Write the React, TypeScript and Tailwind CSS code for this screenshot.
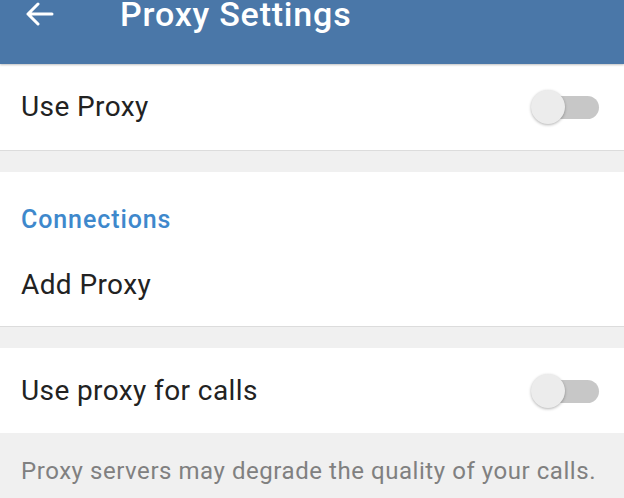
import React, { useState } from 'react';

const font = { fontFamily: 'Roboto, "Noto Sans", sans-serif' };

const Toggle: React.FC<{ on: boolean; onChange: () => void }> = ({ on, onChange }) => (
  <button onClick={onChange} className="relative w-[68px] h-[36px] shrink-0">
    <span className={`absolute left-[10px] right-0 top-[7px] h-[23px] rounded-full ${on ? 'bg-[#a7c4e0]' : 'bg-[#c7c7c7]'}`} />
    <span
      className={`absolute top-[1px] w-[34px] h-[34px] rounded-full shadow-[0_1px_3px_rgba(0,0,0,0.3)] ${on ? 'left-[34px] bg-[#4a86c5]' : 'left-0 bg-[#ececec]'}`}
    />
  </button>
);

const App: React.FC = () => {
  const [useProxy, setUseProxy] = useState(false);
  const [useCalls, setUseCalls] = useState(false);

  return (
    <div className="w-[624px] h-[498px] overflow-hidden bg-[#f0f0f0] flex flex-col" style={font}>
      {/* Header */}
      <div className="h-[64px] bg-[#4a77a8] shrink-0 flex items-start shadow-[0_1px_2px_rgba(0,0,0,0.25)] relative z-10">
        <div className="flex items-center h-[28px] pl-[25px]">
          <svg width="29" height="24" viewBox="0 0 29 24" fill="none" stroke="white" strokeWidth="3" strokeLinecap="round" strokeLinejoin="round">
            <path d="M27 12H3M13 2L3 12l10 10" />
          </svg>
          <span className="ml-[66px] text-[34px] leading-none font-medium tracking-[0.8px] text-white">Proxy Settings</span>
        </div>
      </div>

      {/* Use Proxy */}
      <div className="h-[87px] bg-white shrink-0 flex items-center justify-between pl-[21px] pr-[25px] border-b border-[#dcdcdc]">
        <span className="text-[28px] tracking-[0.4px] text-[#222]">Use Proxy</span>
        <Toggle on={useProxy} onChange={() => setUseProxy(!useProxy)} />
      </div>

      <div className="h-[21px] shrink-0" />

      {/* Connections */}
      <div className="h-[155px] bg-white shrink-0 flex flex-col pl-[21px] border-b border-[#dcdcdc]">
        <span className="mt-[32px] text-[25px] leading-[32px] font-medium tracking-[0.9px] text-[#3e88cc]">Connections</span>
        <span className="mt-[31px] text-[28px] leading-[36px] tracking-[0.4px] text-[#222]">Add Proxy</span>
      </div>

      <div className="h-[21px] shrink-0" />

      {/* Use proxy for calls */}
      <div className="h-[85px] bg-white shrink-0 flex items-center justify-between pl-[21px] pr-[25px]">
        <span className="text-[28px] tracking-[0.4px] text-[#222]">Use proxy for calls</span>
        <Toggle on={useCalls} onChange={() => setUseCalls(!useCalls)} />
      </div>

      <div className="pl-[21px] pt-[23px] text-[24px] leading-[30px] tracking-[0.55px] text-[#808080]">
        Proxy servers may degrade the quality of your calls.
      </div>
    </div>
  );
};

export default App;
